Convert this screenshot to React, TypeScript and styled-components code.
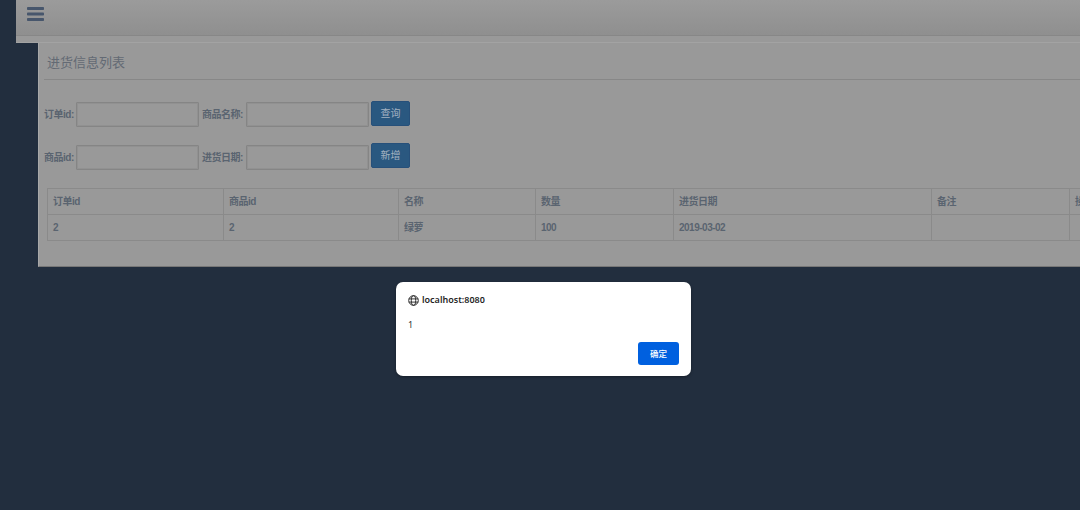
import React from "react";
import styled, { createGlobalStyle } from "styled-components";

const Global = createGlobalStyle`
  html, body { margin: 0; padding: 0; background: #222e3e; overflow: hidden; }
  body { width: 1080px; height: 510px; font-family: "Liberation Sans", "Noto Sans CJK SC", sans-serif; }
  * { box-sizing: border-box; }
`;

const Page = styled.div`
  width: 1080px;
  height: 510px;
  padding-left: 16px;
  overflow: hidden;
  background: #222e3e;
`;

const TopBar = styled.div`
  height: 43px;
  background: #999;
  border-bottom: 1px solid #a3a3a3;
`;

const TopInner = styled.div`
  height: 36px;
  padding: 7px 0 0 11px;
  background: linear-gradient(to bottom, #9b9b9b, #8f8f8f);
  border-bottom: 1px solid #878787;
  color: #47566c;
  display: flex;
  align-items: flex-start;
`;

const Wrapper = styled.div`
  margin-left: 22px;
  width: 1100px;
  height: 224px;
  background: #999;
  border-left: 1px solid #a8a8a8;
  border-bottom: 1px solid #777;
  padding: 0 0 0 5px;
`;

const Title = styled.h2`
  margin: 0;
  height: 37px;
  padding: 10px 0 0 3px;
  font: 400 13px/20px "Liberation Sans", "Noto Sans CJK SC", sans-serif;
  color: #636a74;
  border-bottom: 1px solid #878787;
`;

const Form = styled.div`
  display: flex;
  flex-direction: column;
  gap: 18px;
  padding-top: 22px;
`;

const FormRow = styled.div`
  display: flex;
  align-items: center;
  height: 25px;
`;

const Label = styled.label<{ $w: number }>`
  width: ${(p) => p.$w}px;
  font: 700 10px/14px "Liberation Sans", "Noto Sans CJK SC", sans-serif;
  letter-spacing: -0.5px;
  color: #5a6470;
  white-space: nowrap;
`;

const Field = styled.div`
  width: 123px;
  height: 25px;
  margin-right: 3px;
  background: #999;
  border: 1px solid #858585;
  box-shadow: inset 0 0 0 1px #919191;
  border-radius: 1px;
`;

const Button = styled.button<{ $lift: number }>`
  width: 39px;
  height: 25px;
  margin-top: -${(p) => p.$lift * 2}px;
  margin-left: -1px;
  padding: 0;
  background: #2a5880;
  border: 1px solid #27507a;
  border-radius: 2px;
  color: #a3b1c0;
  font: 400 10px/14px "Liberation Sans", "Noto Sans CJK SC", sans-serif;
`;

const Table = styled.div`
  margin: 18px 0 0 3px;
  width: 1060px;
  border-top: 1px solid #8a8a8a;
  border-left: 1px solid #8a8a8a;
`;

const Row = styled.div`
  display: grid;
  grid-template-columns: 176px 175px 137px 138px 258px 138px 60px;
  height: 26px;
`;

const Cell = styled.div`
  padding: 0 5px;
  border-right: 1px solid #8a8a8a;
  border-bottom: 1px solid #8a8a8a;
  font: 700 10px/25px "Liberation Sans", "Noto Sans CJK SC", sans-serif;
  letter-spacing: -0.5px;
  color: #5a6470;
  white-space: nowrap;
  overflow: hidden;
`;

const Dialog = styled.div`
  position: absolute;
  left: 396px;
  top: 282px;
  width: 295px;
  height: 94px;
  padding: 11px 12px 0;
  background: #fff;
  border-radius: 7px;
  box-shadow: 0 1px 3px rgba(0, 0, 0, 0.35);
`;

const Origin = styled.div`
  display: flex;
  align-items: center;
  gap: 3px;
  height: 14px;
  font: 600 9px/14px "Noto Sans", "Noto Sans CJK SC", sans-serif;
  color: #1f1f1f;
`;

const Message = styled.div`
  margin-top: 11px;
  height: 14px;
  font: 400 9px/14px "Noto Sans", sans-serif;
  color: #333;
`;

const DialogActions = styled.div`
  display: flex;
  justify-content: flex-end;
  margin-top: 10px;
`;

const Ok = styled.button`
  width: 41px;
  height: 23px;
  padding: 0;
  background: #0060df;
  border: none;
  border-radius: 3px;
  color: #fff;
  font: 500 8.5px/23px "Noto Sans CJK SC", sans-serif;
`;

const head = ["订单id", "商品id", "名称", "数量", "进货日期", "备注", "操作"];
const data = ["2", "2", "绿萝", "100", "2019-03-02", "", ""];

export default function App() {
  return (
    <>
      <Global />
      <Page>
        <TopBar>
          <TopInner>
            <svg width="17" height="15" viewBox="0 0 17 15" fill="currentColor" aria-hidden="true">
              <rect x="0" y="0" width="17" height="3" rx="0.8" />
              <rect x="0" y="5.5" width="17" height="3" rx="0.8" />
              <rect x="0" y="11" width="17" height="3" rx="0.8" />
            </svg>
          </TopInner>
        </TopBar>
        <Wrapper>
          <Title>进货信息列表</Title>
          <Form>
            <FormRow>
              <Label $w={32}>订单id:</Label>
              <Field />
              <Label $w={44}>商品名称:</Label>
              <Field />
              <Button $lift={1}>查询</Button>
            </FormRow>
            <FormRow>
              <Label $w={32}>商品id:</Label>
              <Field />
              <Label $w={44}>进货日期:</Label>
              <Field />
              <Button $lift={2}>新增</Button>
            </FormRow>
          </Form>
          <Table>
            <Row>{head.map((h) => <Cell key={h}>{h}</Cell>)}</Row>
            <Row>{data.map((d, i) => <Cell key={i}>{d}</Cell>)}</Row>
          </Table>
        </Wrapper>
        <Dialog>
          <Origin>
            <svg width="11" height="11" viewBox="0 0 24 24" fill="none" stroke="#222" strokeWidth="2" aria-hidden="true">
              <circle cx="12" cy="12" r="10.5" />
              <ellipse cx="12" cy="12" rx="4.8" ry="10.5" />
              <path d="M2 8.5h20M2 15.5h20" />
            </svg>
            localhost:8080
          </Origin>
          <Message>1</Message>
          <DialogActions>
            <Ok>确定</Ok>
          </DialogActions>
        </Dialog>
      </Page>
    </>
  );
}
